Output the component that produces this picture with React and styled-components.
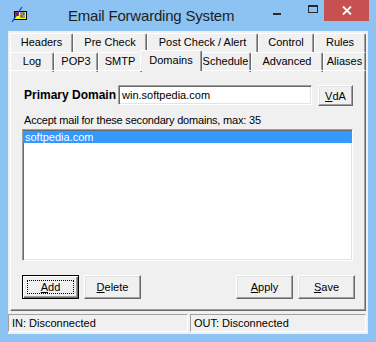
import React from 'react';
import styled, { createGlobalStyle, css } from 'styled-components';

const GlobalStyle = createGlobalStyle`
  body {
    margin: 0;
    font-family: 'Liberation Sans', Arial, sans-serif;
    font-size: 11px;
    color: #000;
  }
`;

const topTabs = [
  { label: 'Headers', width: 63 },
  { label: 'Pre Check', width: 74 },
  { label: 'Post Check / Alert', width: 111 },
  { label: 'Control', width: 56 },
  { label: 'Rules', width: 52 },
];

const bottomTabs = [
  { label: 'Log', width: 44 },
  { label: 'POP3', width: 44 },
  { label: 'SMTP', width: 44 },
  { label: 'Domains', width: 58, selected: true },
  { label: 'Schedule', width: 51 },
  { label: 'Advanced', width: 72 },
  { label: 'Aliases', width: 43 },
];

const raised = css`
  border: 1px solid;
  border-color: #fff #696969 #696969 #fff;
  box-shadow: inset -1px -1px 0 #a0a0a0, inset 1px 1px 0 #e3e3e3;
`;

const sunken = css`
  border: 1px solid;
  border-color: #a0a0a0 #fff #fff #a0a0a0;
  box-shadow: inset 1px 1px 0 #696969, inset -1px -1px 0 #e3e3e3;
`;

export default function App() {
  return (
    <>
      <GlobalStyle />
      <Window>
        <TitleBar>
          <AppIcon />
          <Title>Email Forwarding System</Title>
          <Controls>
            <CaptionButton>
              <MinGlyph />
            </CaptionButton>
            <CaptionButton>
              <MaxGlyph />
            </CaptionButton>
            <CloseButton>
              <svg width="10" height="9" viewBox="0 0 10 9">
                <path d="M1 0.5 L9 8.5 M9 0.5 L1 8.5" stroke="#fff" strokeWidth="1.8" />
              </svg>
            </CloseButton>
          </Controls>
        </TitleBar>
        <Client>
          <Tabs>
            <TabRow $height={19}>
              {topTabs.map(t => (
                <Tab key={t.label} $width={t.width} $height={19}>
                  {t.label}
                </Tab>
              ))}
            </TabRow>
            <TabRow $height={18}>
              {bottomTabs.map(t => (
                <Tab
                  key={t.label}
                  $width={t.width}
                  $height={18}
                  $selected={t.selected}
                >
                  {t.label}
                </Tab>
              ))}
            </TabRow>
          </Tabs>
          <Panel>
            <DomainRow>
              <BoldLabel>Primary Domain</BoldLabel>
              <TextInput>win.softpedia.com</TextInput>
              <Button $width={35} $height={21}>
                <u>V</u>dA
              </Button>
            </DomainRow>
            <Caption>Accept mail for these secondary domains, max: 35</Caption>
            <ListBox>
              <ListItem $selected>softpedia.com</ListItem>
            </ListBox>
            <ButtonRow>
              <Button $width={57} $height={24} $default>
                <FocusRect>
                  <u>A</u>dd
                </FocusRect>
              </Button>
              <Button $width={57} $height={24}>
                <u>D</u>elete
              </Button>
              <Spacer />
              <Button $width={57} $height={24}>
                <u>A</u>pply
              </Button>
              <Button $width={57} $height={24}>
                <u>S</u>ave
              </Button>
            </ButtonRow>
          </Panel>
          <StatusBar>
            <StatusPanel $width={180}>IN: Disconnected</StatusPanel>
            <StatusPanel>OUT: Disconnected</StatusPanel>
          </StatusBar>
        </Client>
      </Window>
    </>
  );
}

function AppIcon() {
  return (
    <IconBox>
      <svg width="17" height="17" viewBox="0 0 17 17">
        <rect x="3.5" y="5.5" width="12" height="8" fill="#ffff00" stroke="#000" />
        <rect x="4" y="6" width="4" height="4" fill="#e02020" />
        <path d="M9 7 h4 v2 h-3 v2 h4" stroke="#1030e0" strokeWidth="1.2" fill="none" />
        <path d="M5 7.5 h2 M5 9 h2" stroke="#1030e0" strokeWidth="1" />
        <path d="M1 16 L11 1" stroke="#1838f0" strokeWidth="1.3" />
      </svg>
    </IconBox>
  );
}

const Window = styled.div`
  width: 376px;
  height: 342px;
  background: #8cc3f2;
  display: flex;
  flex-direction: column;
  box-sizing: border-box;
  padding-bottom: 8px;
`;

const TitleBar = styled.div`
  height: 31px;
  display: flex;
  align-items: center;
  padding-left: 11px;
  flex-shrink: 0;
`;

const IconBox = styled.div`
  width: 17px;
  height: 17px;
  margin-top: -2px;
`;

const Title = styled.div`
  margin-left: 40px;
  margin-bottom: 1px;
  font-size: 15px;
  letter-spacing: -0.2px;
  color: #1e1e1e;
`;

const Controls = styled.div`
  display: flex;
  align-self: flex-start;
  margin-left: auto;
  margin-right: 7px;
`;

const CaptionButton = styled.div`
  width: 26px;
  height: 21px;
  display: flex;
  align-items: center;
  justify-content: center;
`;

const MinGlyph = styled.div`
  width: 8px;
  height: 2px;
  background: #2a2a2a;
  margin-top: 6px;
  margin-left: -16px;
`;

const MaxGlyph = styled.div`
  width: 10px;
  height: 8px;
  box-sizing: border-box;
  border: 1px solid #2a2a2a;
  border-top-width: 2px;
  margin-top: -3px;
  margin-left: 3px;
`;

const CloseButton = styled.div`
  width: 45px;
  height: 21px;
  background: #c75050;
  display: flex;
  align-items: center;
  justify-content: center;
`;

const Client = styled.div`
  flex: 1;
  margin: 0 8px;
  background: #f0f0f0;
  display: flex;
  flex-direction: column;
  padding: 2px 2px 2px;
  min-height: 0;
`;

const Tabs = styled.div`
  display: flex;
  flex-direction: column;
`;

const TabRow = styled.div`
  display: flex;
  align-items: flex-start;
  height: ${p => p.$height}px;
`;

const Tab = styled.div`
  box-sizing: border-box;
  width: ${p => p.$width}px;
  height: ${p => p.$height + 2}px;
  flex-shrink: 0;
  background: #f0f0f0;
  border-left: 1px solid #fff;
  border-top: 1px solid #fff;
  border-right: 1px solid #696969;
  border-radius: 2px 2px 0 0;
  box-shadow: inset -1px 0 0 #a0a0a0;
  display: flex;
  justify-content: center;
  padding-top: 2px;
  white-space: nowrap;
  ${p =>
    p.$selected &&
    css`
      position: relative;
      z-index: 2;
      width: ${p.$width + 4}px;
      height: ${p.$height + 3}px;
      margin: -2px -2px -1px;
      padding-top: 3px;
    `}
`;

const Panel = styled.div`
  flex: 1;
  box-sizing: border-box;
  border: 1px solid;
  border-color: #fff #696969 #696969 #fff;
  box-shadow: inset -1px -1px 0 #a0a0a0;
  padding: 14px 12px 0 11px;
  display: flex;
  flex-direction: column;
`;

const DomainRow = styled.div`
  display: flex;
  align-items: flex-start;
  height: 21px;
`;

const BoldLabel = styled.div`
  width: 94px;
  padding-left: 2px;
  font-size: 12px;
  font-weight: bold;
  line-height: 20px;
  white-space: nowrap;
`;

const TextInput = styled.div`
  ${sunken};
  box-sizing: border-box;
  width: 194px;
  height: 20px;
  background: #fff;
  padding: 0 3px;
  line-height: 18px;
  margin-right: 6px;
`;

const Button = styled.div`
  ${raised};
  box-sizing: border-box;
  width: ${p => p.$width}px;
  height: ${p => p.$height}px;
  background: #f0f0f0;
  display: flex;
  align-items: center;
  justify-content: center;
  flex-shrink: 0;
  ${p =>
    p.$default &&
    css`
      border: 1px solid #000;
      box-shadow: inset 1px 1px 0 #fff, inset -1px -1px 0 #696969,
        inset -2px -2px 0 #a0a0a0;
    `}
`;

const FocusRect = styled.div`
  box-sizing: border-box;
  width: calc(100% - 8px);
  height: calc(100% - 8px);
  border: 1px dotted #000;
  display: flex;
  align-items: center;
  justify-content: center;
`;

const Caption = styled.div`
  margin-top: 8px;
  padding-left: 2px;
  line-height: 13px;
  letter-spacing: -0.2px;
  white-space: nowrap;
`;

const ListBox = styled.div`
  ${sunken};
  margin-top: 2px;
  height: 132px;
  box-sizing: border-box;
  background: #fff;
  padding-top: 1px;
`;

const ListItem = styled.div`
  height: 12px;
  line-height: 12px;
  padding-left: 2px;
  background: ${p => (p.$selected ? '#3399ff' : 'transparent')};
  color: ${p => (p.$selected ? '#fff' : '#000')};
`;

const ButtonRow = styled.div`
  display: flex;
  gap: 5px;
  margin-top: 14px;
  margin-right: -2px;
`;

const Spacer = styled.div`
  flex: 1;
`;

const StatusBar = styled.div`
  display: flex;
  gap: 2px;
  height: 18px;
  margin: 3px -2px 0;
`;

const StatusPanel = styled.div`
  box-sizing: border-box;
  ${p => (p.$width ? `width: ${p.$width}px;` : 'flex: 1; margin-right: 2px;')}
  border: 1px solid;
  border-color: #a0a0a0 #fff #fff #a0a0a0;
  padding-left: 3px;
  line-height: 17px;
  white-space: nowrap;
`;
